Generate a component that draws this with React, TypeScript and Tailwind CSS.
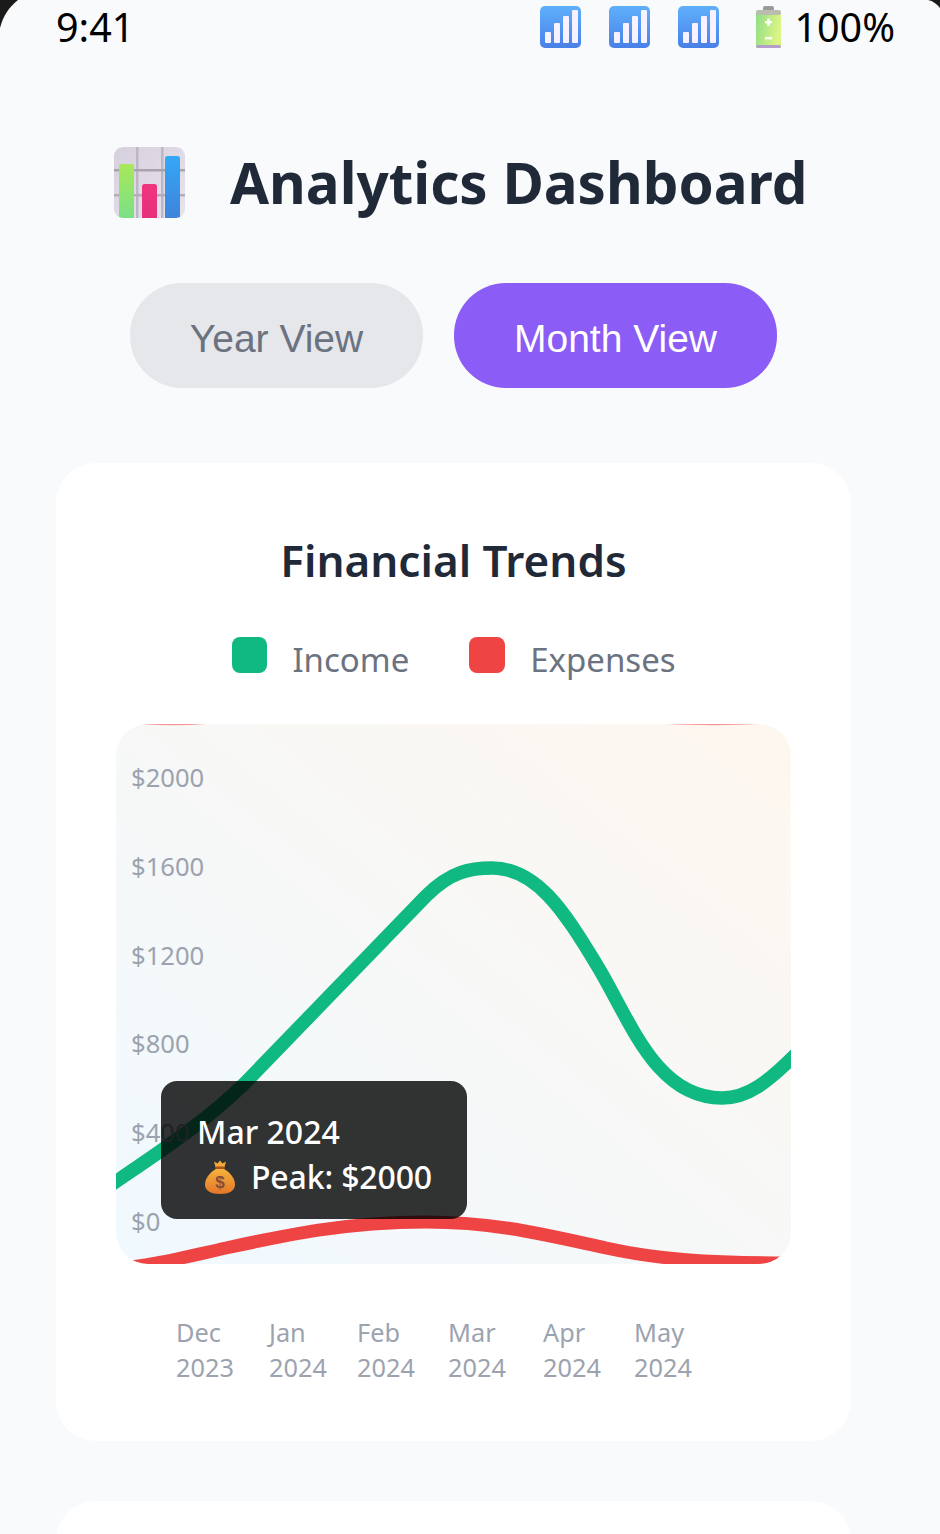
const yLabels = ["$2000", "$1600", "$1200", "$800", "$400", "$0"];

const xLabels = [
  ["Dec", "2023"],
  ["Jan", "2024"],
  ["Feb", "2024"],
  ["Mar", "2024"],
  ["Apr", "2024"],
  ["May", "2024"],
];

function SignalIcon({ id }: { id: string }) {
  return (
    <svg width="42" height="42" viewBox="0 0 42 42" aria-hidden="true">
      <defs>
        <linearGradient id={id} x1="0" y1="0" x2="0" y2="1">
          <stop offset="0" stopColor="#5fb0fb" />
          <stop offset="1" stopColor="#4a80e8" />
        </linearGradient>
      </defs>
      <rect x="0" y="0" width="41" height="42" rx="5" fill={`url(#${id})`} />
      <rect x="5" y="26" width="6" height="11" rx="1" fill="#f8f1ff" />
      <rect x="14" y="17" width="6" height="20" rx="1" fill="#f8f1ff" />
      <rect x="23" y="10" width="6" height="27" rx="1" fill="#f8f1ff" />
      <rect x="32" y="4" width="6" height="33" rx="1" fill="#f8f1ff" />
    </svg>
  );
}

function BatteryIcon() {
  return (
    <svg width="25" height="42" viewBox="0 0 25 42" aria-hidden="true">
      <defs>
        <linearGradient id="batt" x1="0" y1="0" x2="1" y2="0.3">
          <stop offset="0" stopColor="#8fdc86" />
          <stop offset="1" stopColor="#dcf585" />
        </linearGradient>
      </defs>
      <rect x="7" y="0" width="11" height="6" rx="2" fill="#9b9b9b" />
      <rect x="0" y="4" width="25" height="38" rx="3" fill="url(#batt)" />
      <rect x="0" y="4" width="25" height="5" rx="2.5" fill="#b9bcae" />
      <rect x="0" y="39" width="25" height="3" rx="1.5" fill="#b39fc9" />
      <rect x="9" y="15" width="7" height="2.4" fill="#fff" />
      <rect x="11.3" y="12.5" width="2.4" height="7.4" fill="#fff" />
      <rect x="9" y="31" width="7" height="2.4" fill="#fff" />
    </svg>
  );
}

function ChartEmoji() {
  return (
    <svg width="71" height="71" viewBox="0 0 71 71" aria-hidden="true">
      <defs>
        <linearGradient id="cBg" x1="0" y1="0" x2="1" y2="1">
          <stop offset="0" stopColor="#d6d0dd" />
          <stop offset="1" stopColor="#e8e4ee" />
        </linearGradient>
        <linearGradient id="cGreen" x1="0" y1="0" x2="0" y2="1">
          <stop offset="0" stopColor="#a8e85a" />
          <stop offset="1" stopColor="#74e08a" />
        </linearGradient>
        <linearGradient id="cPink" x1="0" y1="0" x2="0" y2="1">
          <stop offset="0" stopColor="#f0357f" />
          <stop offset="1" stopColor="#e5307a" />
        </linearGradient>
        <linearGradient id="cBlue" x1="0" y1="0" x2="0" y2="1">
          <stop offset="0" stopColor="#34a8f6" />
          <stop offset="1" stopColor="#3f80d8" />
        </linearGradient>
        <clipPath id="cClip">
          <rect width="71" height="71" rx="9" />
        </clipPath>
      </defs>
      <g clipPath="url(#cClip)">
        <rect width="71" height="71" fill="url(#cBg)" />
        <rect x="22" y="0" width="2.5" height="71" fill="#bdb7c5" />
        <rect x="47" y="0" width="2.5" height="71" fill="#bdb7c5" />
        <rect x="0" y="22" width="71" height="2.5" fill="#a9a3b0" />
        <rect x="0" y="47" width="71" height="2.5" fill="#b3adba" />
        <rect x="5" y="17" width="15" height="60" rx="2.5" fill="url(#cGreen)" />
        <rect x="28" y="37" width="15" height="40" rx="2.5" fill="url(#cPink)" />
        <rect x="51" y="9" width="15" height="68" rx="2.5" fill="url(#cBlue)" />
      </g>
    </svg>
  );
}

function MoneyBag() {
  return (
    <svg className="shrink-0" width="30" height="34" viewBox="0 0 30 34" aria-hidden="true">
      <defs>
        <linearGradient id="bag" x1="0" y1="0" x2="0" y2="1">
          <stop offset="0" stopColor="#f7b23c" />
          <stop offset="1" stopColor="#e2762a" />
        </linearGradient>
      </defs>
      <path d="M9 1.5 L12.5 3.5 L15 0.5 L17.5 3.5 L21 1.5 L19.5 7 L10.5 7 Z" fill="#f2a93a" />
      <rect x="10" y="6.5" width="10" height="2.5" rx="1.2" fill="#a8541f" />
      <path d="M11 9 C4 13 0 19 0 24.5 C0 31 6 34 15 34 C24 34 30 31 30 24.5 C30 19 26 13 19 9 Z" fill="url(#bag)" />
      <text x="15" y="28" textAnchor="middle" fontSize="17" fontWeight="700" fill="#8a4a35" fontFamily="'Liberation Sans', sans-serif">
        $
      </text>
    </svg>
  );
}

function ChartLines() {
  return (
    <svg
      className="absolute inset-0 [filter:blur(0.6px)]"
      width="675"
      height="540"
      viewBox="0 0 675 540"
      aria-hidden="true"
    >
      {/* red line pokes in at the top edge */}
      <path
        d="M10 -8 C40 -4.5 75 -4.5 105 -8 M530 -8 C570 -4.5 625 -4.5 665 -8"
        fill="none"
        stroke="#ef4444"
        strokeOpacity="0.55"
        strokeWidth="13"
      />
      <path
        d="M-5 461 C40 430 90 398 130 358 L310 172 C335 147 355 144 376 144 C420 144 447 185 482 243 C515 298 540 374 606 374 C632 374 652 358 680 330"
        fill="none"
        stroke="#10b981"
        strokeWidth="13.5"
      />
      <path
        d="M0 544 C30 543 65 534 110 524 C170 511 230 498 310 498 C380 498 430 511 490 524 C540 535 590 539 680 539"
        fill="none"
        stroke="#ef4444"
        strokeWidth="13"
      />
    </svg>
  );
}

export default function App() {
  return (
    <div className="relative h-[1534px] w-[940px] overflow-hidden bg-[#f8fafc] font-['Noto_Sans',sans-serif]">
      <svg className="absolute left-0 top-0" width="18" height="28" viewBox="0 0 18 28" aria-hidden="true">
        <path d="M0 0 H18 C9 7 3 16 0 28 Z" fill="#1a1a1a" />
      </svg>
      <svg className="absolute right-0 top-0" width="12" height="8" viewBox="0 0 12 8" aria-hidden="true">
        <path d="M0 0 H12 V8 C9 4 5 1 0 0 Z" fill="#1a1a1a" />
      </svg>

      <div className="flex h-[54px] items-center justify-between pl-[56px] pr-[45px] text-[39.5px] leading-[46px] text-black">
        <span>9:41</span>
        <div className="flex items-center">
          <SignalIcon id="sig1" />
          <span className="w-[27px]" />
          <SignalIcon id="sig2" />
          <span className="w-[27px]" />
          <SignalIcon id="sig3" />
          <span className="w-[36px]" />
          <BatteryIcon />
          <span className="ml-[13px]">100%</span>
        </div>
      </div>

      <div className="w-[907px] px-[56px]">
        <div className="mt-[93px] ml-[58px] flex h-[71px] items-center gap-[45px]">
          <ChartEmoji />
          <h1 className="translate-y-[1px] whitespace-nowrap text-[56.5px] font-bold leading-none text-[#1f2937]">
            Analytics Dashboard
          </h1>
        </div>

        <div className="mt-[65px] flex justify-center gap-[31px] font-['Liberation_Sans',sans-serif] text-[39px] leading-none">
          <button className="flex h-[105px] w-[293px] items-center justify-center rounded-[52px] bg-[#e5e7eb] pt-[6px] text-[#6b7280]">
            Year View
          </button>
          <button className="flex h-[105px] w-[323px] items-center justify-center rounded-[52px] bg-[#8b5cf6] pt-[6px] text-white">
            Month View
          </button>
        </div>

        <section className="mt-[75px] rounded-[40px] bg-white px-[60px] pb-[56px] pt-[65px]">
          <h2 className="text-center text-[44px] font-semibold leading-[64px] text-[#1f2937]">Financial Trends</h2>

          <div className="mt-[44px] ml-[1px] flex justify-center gap-[60px] text-[33px] leading-[46px] text-[#6b7280]">
            <div className="flex items-start gap-[25px]">
              <span className="mt-[1px] h-[36px] w-[35px] rounded-[8px] bg-[#10b981]" />
              <span className="mt-[1px]">Income</span>
            </div>
            <div className="flex items-start gap-[25px]">
              <span className="mt-[1px] h-[36px] w-[36px] rounded-[8px] bg-[#ef4444]" />
              <span className="mt-[1px]">Expenses</span>
            </div>
          </div>

          <div className="relative mt-[41px] h-[540px] overflow-hidden rounded-[32px] bg-gradient-to-tr from-[#f0f9ff] to-[#fef7ef]">
            <ChartLines />
            <div className="absolute left-[15px] top-[34px] flex flex-col gap-[48.8px] text-[25.6px] leading-[40px] text-[#9ca3af]">
              {yLabels.map((label) => (
                <span key={label}>{label}</span>
              ))}
            </div>
            <div className="absolute left-[45px] top-[357px] h-[138px] w-[306px] whitespace-nowrap rounded-[16px] bg-black/80 px-[36px] pt-[28px] text-[32px] font-medium leading-[45px] text-white">
              <div>Mar 2024</div>
              <div className="flex items-center gap-[17px] pl-[8px]">
                <MoneyBag />
                <span className="-ml-[1px] tracking-[-0.15px]">Peak: $2000</span>
              </div>
            </div>
          </div>

          <div className="mt-[51px] ml-[60px] grid grid-cols-[93px_88px_91px_95px_91px_auto] text-[25.3px] leading-[35px] text-[#9ca3af]">
            {xLabels.map(([month, year]) => (
              <div key={month} className="flex flex-col">
                <span>{month}</span>
                <span>{year}</span>
              </div>
            ))}
          </div>
        </section>

        <section className="mt-[60px] h-[300px] rounded-[40px] bg-white" />
      </div>
    </div>
  );
}
